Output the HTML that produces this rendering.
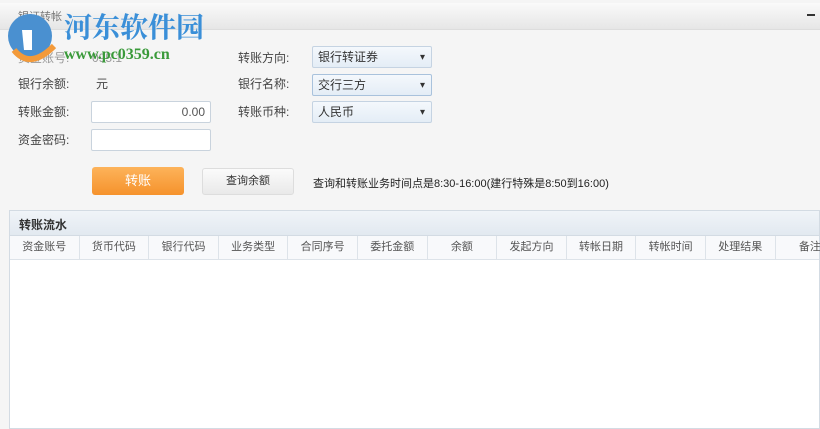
<!DOCTYPE html><html><head><meta charset="utf-8"><style>
*{margin:0;padding:0;box-sizing:border-box}
body{width:820px;height:429px;overflow:hidden;background:#f5f5f5;font-family:"Liberation Sans","Noto Sans CJK SC",sans-serif;font-size:12px;color:#333;position:relative}
.a{position:absolute}
.title{left:0;top:3px;width:820px;height:27px;background:linear-gradient(#fafafa,#e6e6e6);border-bottom:1px solid #ddd}
.lbl{font-size:12px;color:#444;line-height:14px}
.inp{background:#fff;border:1px solid #c9d3dd;border-radius:2px;height:22px}
.sel{background:linear-gradient(#f4f8fc,#e4edf6);border:1px solid #c5d3e2;border-radius:2px;height:22px;width:120px;padding:3px 5px;font-size:12px;line-height:14px}
.sel:after{content:"▾";position:absolute;right:6px;top:4px;font-size:10px;color:#333}
.panel{left:9px;top:210px;width:811px;height:219px;background:#fff;border:1px solid #d3dbe3}
.ph{height:25px;background:linear-gradient(#f0f4f8,#e2e9f0);border-bottom:1px solid #d3dbe3;padding:5px 9px;font-size:12px;font-weight:bold;color:#333}
.ch{height:24px;background:#f8f9fb;border-bottom:1px solid #dde3e9;display:flex}
.ch div{width:69.6px;flex:none;border-right:1px solid #dde3e9;text-align:center;line-height:23px;font-size:11px;color:#555}
</style></head><body>
<div class="a title"></div>
<div class="a" style="left:18px;top:8px;font-size:11px;color:#777">银证转帐</div>
<div class="a" style="left:807px;top:14px;width:8px;height:2px;background:#333"></div>
<div class="a lbl" style="left:18px;top:51px;color:#999">资金账号:</div>
<div class="a lbl" style="left:92px;top:51px;color:#999">095.1</div>
<svg class="a" style="left:4px;top:10px" width="60" height="60" viewBox="0 0 60 60"><circle cx="26" cy="26" r="22" fill="#4a90d0"/><path d="M10 40 Q26 60 50 36" stroke="#f39a3a" stroke-width="6" fill="none"/><path d="M18 20h10v20h-8z" fill="#fff"/></svg>
<div class="a" style="left:64px;top:8px;font-size:28px;font-weight:bold;color:#3a8fd8;font-family:'Noto Serif CJK SC',serif;line-height:36px">河东软件园</div>
<div class="a" style="left:64px;top:46px;font-size:16px;font-weight:bold;color:#3a9a3a;font-family:'Liberation Serif',serif">www.pc0359.cn</div>
<div class="a lbl" style="left:18px;top:77px">银行余额:</div>
<div class="a lbl" style="left:96px;top:77px">元</div>
<div class="a lbl" style="left:18px;top:105px">转账金额:</div>
<div class="a inp" style="left:91px;top:101px;width:120px;text-align:right;padding:3px 5px;color:#555">0.00</div>
<div class="a lbl" style="left:18px;top:133px">资金密码:</div>
<div class="a inp" style="left:91px;top:129px;width:120px"></div>
<div class="a lbl" style="left:238px;top:51px">转账方向:</div>
<div class="a sel" style="left:312px;top:46px">银行转证券</div>
<div class="a lbl" style="left:238px;top:77px">银行名称:</div>
<div class="a sel" style="left:312px;top:74px;border-color:#a9c2dc">交行三方</div>
<div class="a lbl" style="left:238px;top:105px">转账币种:</div>
<div class="a sel" style="left:312px;top:101px">人民币</div>
<div class="a" style="left:92px;top:167px;width:92px;height:28px;border-radius:3px;background:linear-gradient(#fdb35a,#f5922c);color:#fff;text-align:center;line-height:28px;font-size:13px">转账</div>
<div class="a" style="left:202px;top:168px;width:92px;height:27px;border-radius:3px;background:linear-gradient(#fbfbfb,#e9e9e9);border:1px solid #ddd;text-align:center;line-height:25px;font-size:11px;color:#333">查询余额</div>
<div class="a" style="left:313px;top:175px;font-size:11px;color:#222">查询和转账业务时间点是8:30-16:00(建行特殊是8:50到16:00)</div>
<div class="a panel"><div class="ph">转账流水</div><div class="ch"><div>资金账号</div><div>货币代码</div><div>银行代码</div><div>业务类型</div><div>合同序号</div><div>委托金额</div><div>余额</div><div>发起方向</div><div>转帐日期</div><div>转帐时间</div><div>处理结果</div><div>备注</div></div></div>
</body></html>
